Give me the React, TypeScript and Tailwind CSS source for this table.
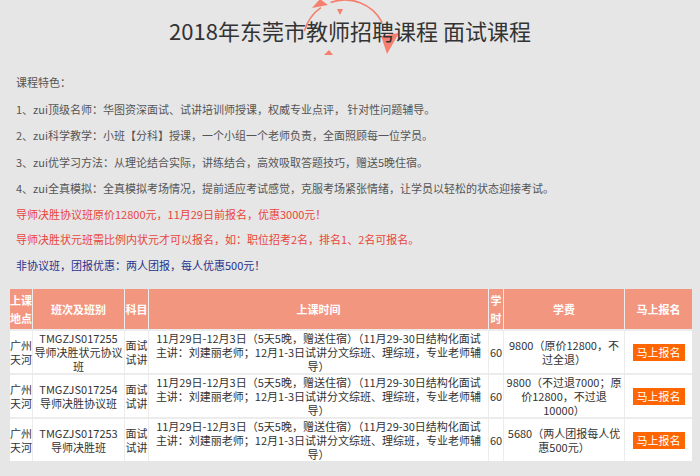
import React from "react"

const rows = [
  { place: "广州天河", code: "TMGZJS017255", name: "导师决胜状元协议班", subject: "面试试讲", hours: "60", fee: "9800（原价12800，不过全退）" },
  { place: "广州天河", code: "TMGZJS017254", name: "导师决胜协议班", subject: "面试试讲", hours: "60", fee: "9800（不过退7000；原价12800，不过退10000）" },
  { place: "广州天河", code: "TMGZJS017253", name: "导师决胜班", subject: "面试试讲", hours: "60", fee: "5680（两人团报每人优惠500元）" },
]

const features = [
  "1、zui顶级名师：华图资深面试、试讲培训师授课，权威专业点评， 针对性问题辅导。",
  "2、zui科学教学：小班【分科】授课，一个小组一个老师负责，全面照顾每一位学员。",
  "3、zui优学习方法：从理论结合实际，讲练结合，高效吸取答题技巧，赠送5晚住宿。",
  "4、zui全真模拟：全真模拟考场情况，提前适应考试感觉，克服考场紧张情绪，让学员以轻松的状态迎接考试。",
]

function Swirl() {
  return (
    <svg
      className="absolute left-[290px] top-0"
      width="120"
      height="60"
      viewBox="290 0 120 60"
      fill="none"
    >
      <path d="M330.6 2.5 A42 42 0 0 1 382.1 22.3" stroke="#f5806f" strokeWidth="1.6" />
      <path d="M320.9 7.6 A42 42 0 0 0 304.4 31.1" stroke="#f5806f" strokeWidth="1.6" />
      <polygon points="312,8 320,-1 328,5" fill="#f5806f" />
      <polygon points="381,36 399,33 387,54" fill="#f5806f" />
      <polygon points="337,9 343,9 340,15" fill="#f5806f" />
      <polygon points="324,55 333,55 329,50" fill="#f5806f" />
    </svg>
  )
}

const head = "bg-[#f39680] text-white font-bold leading-[18px] h-[40px] flex items-center justify-center text-center"
const cell = "bg-white text-[#333] leading-[14px] flex items-center justify-center text-center"

export default function App() {
  return (
    <div className="w-[700px] h-[476px] bg-[#e6e6e6] font-['Noto_Sans_CJK_SC',sans-serif] overflow-hidden">
      <div className="relative h-[60px] flex items-center justify-center">
        <Swirl />
        <h1 className="relative z-10 text-[22px] text-[#333]">2018年东莞市教师招聘课程 面试课程</h1>
      </div>

      <div className="pt-[9px] pl-4 text-[11px]">
        <p className="leading-[26.5px] text-[#555]">课程特色：</p>
        {features.map((f) => (
          <p key={f} className="leading-[26.5px] text-[#555]">
            {f}
          </p>
        ))}
        <p className="leading-[25.5px] text-[#e8453c]">导师决胜协议班原价12800元，11月29日前报名，优惠3000元！</p>
        <p className="leading-[25.5px] text-[#e8453c]">导师决胜状元班需比例内状元才可以报名，如：职位招考2名，排名1、2名可报名。</p>
        <p className="leading-[24.5px] text-[#28328c]">非协议班，团报优惠：两人团报，每人优惠500元！</p>
      </div>

      <div className="mt-[12px] ml-[10px] w-[682px] grid grid-cols-[22px_91px_23px_339px_14px_120px_67px] gap-x-px gap-y-0.5 bg-[#ececec] text-[11px]">
        <div className={head}>上课地点</div>
        <div className={head}>班次及班别</div>
        <div className={head}>科目</div>
        <div className={head}>上课时间</div>
        <div className={head}>学时</div>
        <div className={head}>学费</div>
        <div className={head}>马上报名</div>

        {rows.map((r) => (
          <React.Fragment key={r.code}>
            <div className={cell}>{r.place}</div>
            <div className={cell}>
              <p>
                {r.code}
                <br />
                {r.name}
              </p>
            </div>
            <div className={cell}>{r.subject}</div>
            <div className={cell}>
              <p>
                11月29日-12月3日（5天5晚，赠送住宿）（11月29-30日结构化面试
                <br />
                主讲：刘建丽老师；12月1-3日试讲分文综班、理综班，专业老师辅
                <br />
                导）
              </p>
            </div>
            <div className={cell}>{r.hours}</div>
            <div className={cell}>
              <p>{r.fee}</p>
            </div>
            <div className={cell}>
              <button className="bg-[#ff6600] text-white text-[11px] leading-[15px] px-1 py-px">马上报名</button>
            </div>
          </React.Fragment>
        ))}
      </div>
    </div>
  )
}
